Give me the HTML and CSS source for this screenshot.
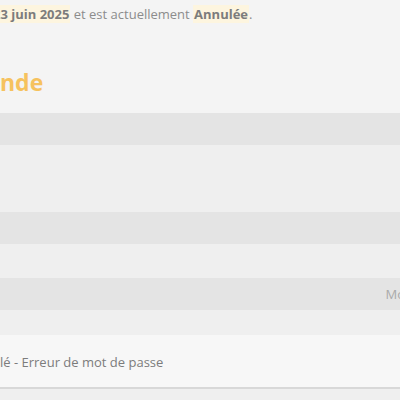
FILE: index.html
```html
<!DOCTYPE html>
<html lang="fr">
<head>
    <meta charset="UTF-8" />
    <meta name="viewport" content="width=device-width, initial-scale=1.0" />
    <title>Commande</title>
    <link rel="stylesheet" href="styles.css">
</head>
<body>

<div class="page">
    <p class="intro">
        <mark class="first">23 juin 2025</mark> et est actuellement <mark>Annulée</mark>.
    </p>

    <h2 class="title">nde</h2>

    <div class="details">
        <div class="row dark"></div>
        <div class="row tall"></div>
        <div class="row dark"></div>
        <div class="row"></div>
        <div class="row dark"><span class="label">Mo</span></div>
        <div class="row short"></div>
    </div>

    <div class="note">
        <p>lé - Erreur de mot de passe</p>
    </div>
</div>

</body>
</html>
```

FILE: styles.css
```css
body {
    margin: 0;
    font-family: 'Open Sans', 'Noto Sans', sans-serif;
    background-color: #efefef;
    color: #8c8c8c;
    overflow: hidden;
}

.page {
    width: 400px;
    height: 400px;
    overflow: hidden;
}

.intro {
    margin: 0;
    padding-top: 4px;
    height: 29px;
    background: #f4f4f4;
    font-size: 13px;
    line-height: 20px;
    white-space: nowrap;
}

.intro mark {
    background: #fdf5df;
    color: #7c7c7c;
    font-weight: bold;
    padding: 0 1px;
}

.intro .first {
    margin-left: -8px;
}

.title {
    margin: 0;
    height: 80px;
    background: #f4f4f4;
    color: #f6c25e;
    font-size: 23px;
    font-weight: bold;
    line-height: 34px;
    padding-top: 32px;
    box-sizing: border-box;
}

.details {
    display: flex;
    flex-direction: column;
}

.row {
    height: 34px;
    display: flex;
    justify-content: flex-end;
    align-items: center;
}

.row.dark {
    height: 32px;
    background: #e4e4e4;
}

.row.tall {
    height: 67px;
}

.row.short {
    height: 25px;
}

.label {
    font-size: 13px;
    color: #aaa;
    margin-right: -5px;
}

.note {
    height: 52px;
    background: #f7f7f7;
    border-bottom: 2px solid #d8d8d8;
    display: flex;
    align-items: center;
}

.note p {
    margin: 0;
    padding-top: 2px;
    font-size: 13px;
    color: #7c7c7c;
}
```
